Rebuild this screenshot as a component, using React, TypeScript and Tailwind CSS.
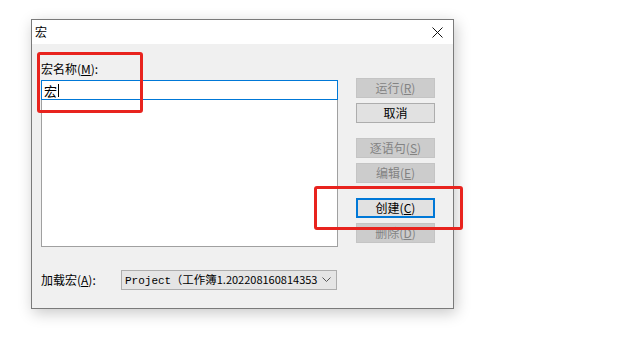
import React from "react";

const cjk = "font-['Microsoft_YaHei','Noto_Sans_CJK_SC',sans-serif]";

function Btn({ label, acc, kind }: { label: string; acc?: string; kind: "off" | "on" | "focus" }) {
  const look =
    kind === "off"
      ? "bg-[#cccccc] border border-[#c4c4c4] text-[#838383]"
      : kind === "focus"
      ? "bg-[#e1e1e1] border-2 border-[#0078d7] text-black"
      : "bg-[#e1e1e1] border border-[#adadad] text-black";
  return (
    <div className={`h-[20px] w-[79px] flex items-center justify-center text-[12px] leading-none ${look}`}>
      <span>
        {label}
        {acc && (
          <>
            (<span className="underline">{acc}</span>)
          </>
        )}
      </span>
    </div>
  );
}

export default function App() {
  return (
    <div className={`relative w-[632px] h-[343px] bg-white pt-[19px] pl-[31px] ${cjk}`}>
      {/* dialog */}
      <div className="w-[423px] h-[290px] border border-[#7a7a7a] bg-[#f0f0f0] shadow-[2px_4px_14px_rgba(0,0,0,0.22)] flex flex-col">
        <div className="h-[24px] bg-white flex items-center justify-between pl-[3px] pr-[10px]">
          <span className="text-[12px] text-black leading-none">宏</span>
          <svg width="11" height="11" viewBox="0 0 11 11">
            <path d="M0.5 0.5L10.5 10.5M10.5 0.5L0.5 10.5" stroke="#111" strokeWidth="1" />
          </svg>
        </div>
        <div className="flex flex-1 pl-[9px]">
          <div className="w-[297px] flex flex-col pt-[17px]">
            <div className="h-[16px] text-[12px] leading-[16px] text-black">
              宏名称(<span className="underline">M</span>):
            </div>
            <div className="mt-[3px] h-[20px] border border-[#0078d7] bg-white flex items-center pl-[2px] text-[13px] leading-none text-black">
              宏<span className="inline-block w-px h-[13px] bg-black ml-px" />
            </div>
            <div className="h-[147px] border border-[#a0a0a0] border-t-0 bg-white" />
            <div className="mt-[23px] flex items-center h-[20px]">
              <span className="w-[80px] text-[12px] text-black leading-none">
                加载宏(<span className="underline">A</span>):
              </span>
              <div className="w-[216px] h-[20px] bg-[#e5e5e5] border border-[#adadad] flex items-center pl-[3px] pr-[5px]">
                <span className="flex-1 text-[11px] leading-none text-black whitespace-nowrap">
                  <span className="font-['Liberation_Mono',monospace] text-[11px]">Project</span>（
                  <span className="text-[11.5px]">工作簿</span>
                  <span>1.202208160814353</span>
                </span>
                <svg width="9" height="6" viewBox="0 0 9 6" className="ml-[2px] shrink-0">
                  <path d="M0.5 0.5L4.5 4.5L8.5 0.5" stroke="#555" fill="none" strokeWidth="1" />
                </svg>
              </div>
            </div>
          </div>
          <div className="ml-[18px] pt-[34px] flex flex-col">
            <Btn label="运行" acc="R" kind="off" />
            <div className="mt-[5px]">
              <Btn label="取消" kind="on" />
            </div>
            <div className="mt-[15px]">
              <Btn label="逐语句" acc="S" kind="off" />
            </div>
            <div className="mt-[5px]">
              <Btn label="编辑" acc="E" kind="off" />
            </div>
            <div className="mt-[15px]">
              <Btn label="创建" acc="C" kind="focus" />
            </div>
            <div className="mt-[5px]">
              <Btn label="删除" acc="D" kind="off" />
            </div>
          </div>
        </div>
      </div>
      {/* red highlight boxes */}
      <div className="absolute left-[37px] top-[52px] w-[106px] h-[61px] border-[3px] border-[#e8231e] rounded-[3px]" />
      <div className="absolute left-[314px] top-[186px] w-[149px] h-[44px] border-[3px] border-[#e8231e] rounded-[3px]" />
    </div>
  );
}
